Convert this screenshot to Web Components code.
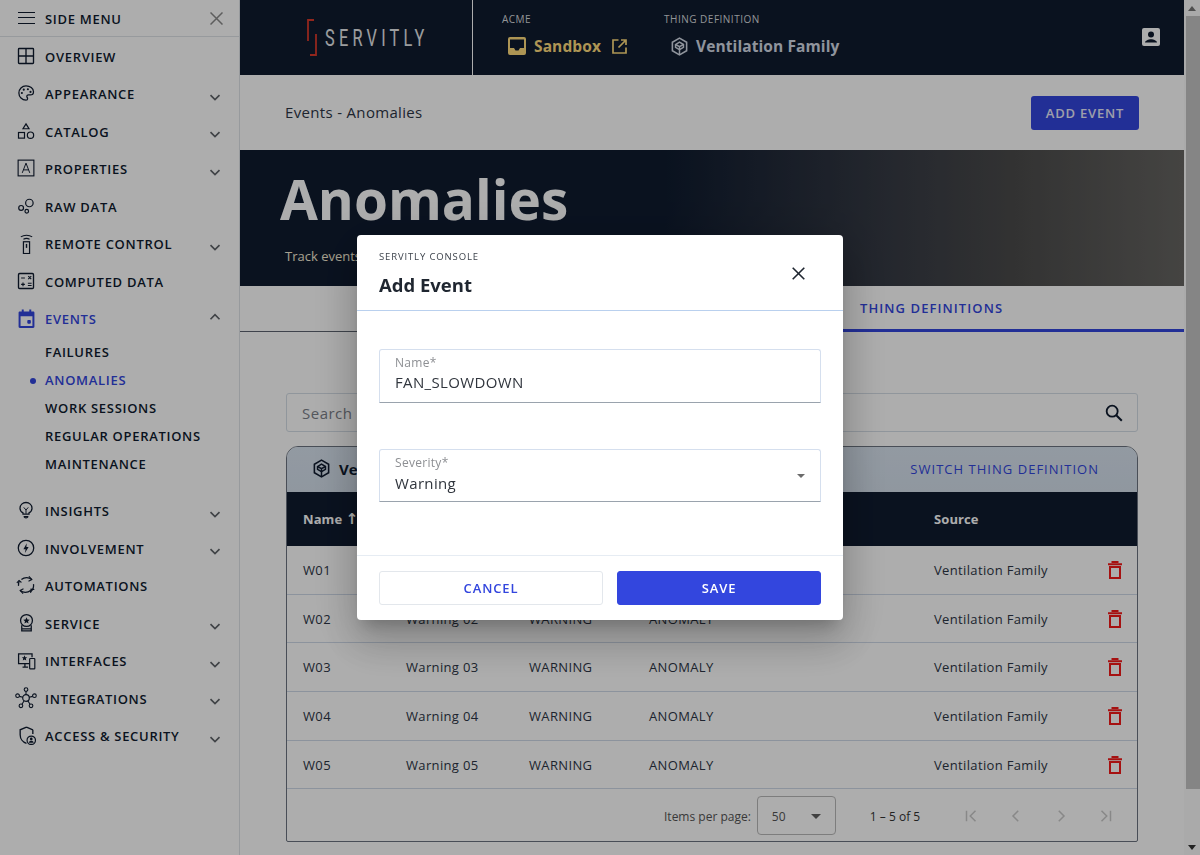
<!DOCTYPE html>
<html>
<head>
<meta charset="utf-8">
<title>Servitly</title>
<style>
  html, body { margin: 0; height: 100%; overflow: hidden; }
  body { font-family: "Open Sans", "Liberation Sans", sans-serif; color: #0f1b2f; background: #fff; }
  app-shell { height: 855px; }
</style>
</head>
<body>
<app-shell>
  <side-menu slot="side">
    <nav-item label="OVERVIEW" icon="overview"></nav-item>
    <nav-item label="APPEARANCE" icon="palette" chevron="down"></nav-item>
    <nav-item label="CATALOG" icon="shapes" chevron="down"></nav-item>
    <nav-item label="PROPERTIES" icon="props" chevron="down"></nav-item>
    <nav-item label="RAW DATA" icon="bubbles"></nav-item>
    <nav-item label="REMOTE CONTROL" icon="remote" chevron="down"></nav-item>
    <nav-item label="COMPUTED DATA" icon="calc"></nav-item>
    <nav-item label="EVENTS" icon="event" chevron="up" active>
      <sub-item>FAILURES</sub-item>
      <sub-item active>ANOMALIES</sub-item>
      <sub-item>WORK SESSIONS</sub-item>
      <sub-item>REGULAR OPERATIONS</sub-item>
      <sub-item>MAINTENANCE</sub-item>
    </nav-item>
    <nav-item label="INSIGHTS" icon="bulb" chevron="down"></nav-item>
    <nav-item label="INVOLVEMENT" icon="bolt" chevron="down"></nav-item>
    <nav-item label="AUTOMATIONS" icon="sync"></nav-item>
    <nav-item label="SERVICE" icon="badge" chevron="down"></nav-item>
    <nav-item label="INTERFACES" icon="devices" chevron="down"></nav-item>
    <nav-item label="INTEGRATIONS" icon="hub" chevron="down"></nav-item>
    <nav-item label="ACCESS &amp; SECURITY" icon="shield" chevron="down"></nav-item>
  </side-menu>
  <top-bar slot="top"></top-bar>
  <events-page slot="page"></events-page>
</app-shell>
<add-event-dialog></add-event-dialog>

<script>
  // shared icon paths, all on a 24x24 box
  const ICONS = {
    overview: '<rect x="2" y="2" width="20" height="20" rx="1" fill="none" stroke="currentColor" stroke-width="1.8"/><path d="M12 2v20M2 12h20" stroke="currentColor" stroke-width="1.8"/>',
    palette: '<path d="M12 2.5C6.7 2.5 2.5 6.7 2.5 12s4.2 9.5 9.5 9.5c1.3 0 2.1-.9 2.1-2 0-1.4-1-1.8-1-3 0-1.2 1-2 2.2-2h2.400c2.600 0 4.300-1.800 4.300-4.300C22 5.800 17.500 2.500 12 2.500z" fill="none" stroke="currentColor" stroke-width="1.700"/><circle cx="6.500" cy="12" r="1.400" fill="currentColor"/><circle cx="9" cy="7.500" r="1.400" fill="currentColor"/><circle cx="14.500" cy="7" r="1.400" fill="currentColor"/><circle cx="18" cy="10.500" r="1.400" fill="currentColor"/>',
    shapes: '<path d="M12 2.500l4 6.500H8z" fill="none" stroke="currentColor" stroke-width="1.600"/><rect x="2" y="14" width="8" height="7.500" fill="none" stroke="currentColor" stroke-width="1.600"/><circle cx="18" cy="17.500" r="4.200" fill="none" stroke="currentColor" stroke-width="1.600"/>',
    props: '<rect x="1.500" y="1.500" width="21" height="21" fill="none" stroke="currentColor" stroke-width="1.500"/><path d="M7 18.500L12 5.500l5 13M8.700 14.500h6.600" fill="none" stroke="currentColor" stroke-width="1.300"/>',
    bubbles: '<circle cx="5.500" cy="14.500" r="3.200" fill="none" stroke="currentColor" stroke-width="1.600"/><circle cx="16.500" cy="8" r="5" fill="none" stroke="currentColor" stroke-width="1.600"/><circle cx="13" cy="19" r="2.400" fill="none" stroke="currentColor" stroke-width="1.600"/>',
    remote: '<rect x="8.500" y="10" width="7" height="13.500" fill="none" stroke="currentColor" stroke-width="1.400"/><path d="M12 12.500v4.500" stroke="currentColor" stroke-width="1.600"/><path d="M5.500 4.500C9 2 15 2 18.500 4.500M8.500 7.200c2-1.200 5-1.200 7 0" fill="none" stroke="currentColor" stroke-width="1.200"/>',
    calc: '<rect x="2" y="2" width="20" height="20" rx="1.500" fill="none" stroke="currentColor" stroke-width="1.800"/><path d="M5.500 8h5M15 5.500l4 4M19 5.500l-4 4M5.500 16.500h5M8 14v5M14.500 15h5M14.500 18h5" stroke="currentColor" stroke-width="1.500"/>',
    event: '<path d="M2 22.500V4.500c0-.8.700-1.500 1.500-1.500H6V.5h2.500V3h7V.5H18V3h2.500c.8 0 1.500.7 1.500 1.500v18c0 .8-.7 1.500-1.500 1.500h-17C2.700 24 2 23.300 2 22.500zM4.500 9v12.500h15V9z" fill="currentColor" fill-rule="evenodd"/><rect x="13" y="14" width="4.500" height="4.500" rx="1" fill="currentColor"/>',
    bulb: '<path d="M8 17.500v-1.700c-2.500-1.400-4-3.500-4-6.300C4 5.300 7.500 2 12 2s8 3.300 8 7.500c0 2.800-1.500 4.900-4 6.300v1.700zM9 21h6" fill="none" stroke="currentColor" stroke-width="1.700"/><path d="M9 8.500l3 3.500 3-3.500M12 12v5M9.500 21l1 1.500h3l1-1.500" fill="none" stroke="currentColor" stroke-width="1.300"/>',
    bolt: '<circle cx="12" cy="12" r="10.300" fill="none" stroke="currentColor" stroke-width="1.700"/><path d="M13 5.500l-4.500 8H11.500L10.500 18.500 15.500 10.500H12.500z" fill="currentColor"/>',
    sync: '<path d="M6.500 5.500A9.500 9.500 0 0 1 19 5.500M21 11a9.500 9.500 0 0 1-3.500 9M17.500 18.500A9.500 9.500 0 0 1 5 18.500M3 13a9.500 9.500 0 0 1 1-6" fill="none" stroke="currentColor" stroke-width="1.500"/><path d="M15.500 1.500l3.500 4-4 2M8.500 22.500l-3.500-4 4-2M1 9.500L3.700 6.500 6.500 9M17.500 21.500L18 17l4 .5" fill="none" stroke="currentColor" stroke-width="1.300"/>',
    badge: '<circle cx="12" cy="9.500" r="7.500" fill="none" stroke="currentColor" stroke-width="1.600"/><path d="M12 5.500l1.200 2.700 2.900.3-2.200 1.900.7 2.900-2.600-1.500-2.600 1.500.7-2.900-2.200-1.900 2.900-.3z" fill="currentColor"/><path d="M6 15.500v7h12v-7M6 20h12" fill="none" stroke="currentColor" stroke-width="1.600"/>',
    devices: '<path d="M16 16H2V3.500h17V8" fill="none" stroke="currentColor" stroke-width="1.600"/><path d="M7 20.500h7M10 16v4.500" stroke="currentColor" stroke-width="1.600"/><path d="M9.500 5.500l1 2.300 2.400.2-1.800 1.600.6 2.400-2.200-1.300-2.200 1.300.6-2.400L6.100 8l2.400-.2z" fill="currentColor"/><rect x="16" y="9.500" width="6.500" height="13" rx=".8" fill="none" stroke="currentColor" stroke-width="1.500"/>',
    hub: '<circle cx="12" cy="12" r="3.600" fill="none" stroke="currentColor" stroke-width="1.300"/><circle cx="12" cy="2.800" r="2" fill="none" stroke="currentColor" stroke-width="1.200"/><circle cx="2.800" cy="9.500" r="2" fill="none" stroke="currentColor" stroke-width="1.200"/><circle cx="21.200" cy="9.500" r="2" fill="none" stroke="currentColor" stroke-width="1.200"/><circle cx="6.500" cy="20.500" r="2" fill="none" stroke="currentColor" stroke-width="1.200"/><circle cx="17.500" cy="20.500" r="2" fill="none" stroke="currentColor" stroke-width="1.200"/><path d="M12 4.800v3.600M4.700 10.200l3.900 1M19.300 10.200l-3.900 1M7.600 18.800l2.400-3.800M16.400 18.800L14 15" stroke="currentColor" stroke-width="1.200"/>',
    shield: '<path d="M12 1.500L4 4.800v6.200c0 5 3.400 9.500 8 11M20 4.800L12 1.500M20 4.800V10" fill="none" stroke="currentColor" stroke-width="1.700"/><circle cx="18" cy="18" r="5.300" fill="none" stroke="currentColor" stroke-width="1.500"/><circle cx="18" cy="16.300" r="1.700" fill="currentColor"/><path d="M14.800 21c.5-1.700 1.700-2.300 3.200-2.300s2.700.6 3.200 2.300z" fill="currentColor"/>',
    cube: '<path d="M12 1.500l9 5.200v10.600l-9 5.200-9-5.200V6.700z" fill="none" stroke="currentColor" stroke-width="2"/><path d="M7 9.500l5-3 5 3v3.500l-5 3-5-3z" fill="none" stroke="currentColor" stroke-width="1.900"/><path d="M7 9.500l5 2.800 5-2.800M12 12.300V22" fill="none" stroke="currentColor" stroke-width="1.900"/>'
  };
  const ICON_SIZE = { hub: 22, sync: 20, remote: 21, event: 19, shield: 19, badge: 19, devices: 19 };
  const svg = (name, size) => `<svg width="${size}" height="${size}" viewBox="0 0 24 24" aria-hidden="true">${ICONS[name]}</svg>`;
  const CHEVRON = { down: 'M6 9.500l6 6 6-6', up: 'M6 15l6-6 6 6' };
  const TRASH = '<svg width="14" height="18" viewBox="0 0 14 18" aria-hidden="true"><path d="M2 6h10v11H2z" fill="none" stroke="currentColor" stroke-width="2"/><path d="M0 3.200h14M3.500 1h7" stroke="currentColor" stroke-width="2"/></svg>';

  class AppShell extends HTMLElement {
    constructor() {
      super();
      this.attachShadow({ mode: "open" }).innerHTML = `
        <style>
          :host { display: grid; grid-template-columns: 240px 944px 16px; grid-template-rows: 75px 1fr; overflow: hidden; }
          .side { grid-row: 1 / 3; display: block; }
          .bar { grid-row: 1 / 3; grid-column: 3; display: grid; grid-template-rows: 16px 773px 1fr 16px; background: #fbfbfb; }
          .bar i { display: flex; align-items: center; justify-content: center; }
          .bar i::after { content: ""; border: 4px solid transparent; }
          .bar .u::after { border-bottom: 5px solid #777; border-top: 0; }
          .bar .d::after { border-top: 5px solid #333; border-bottom: 0; }
          .bar b { background: #c4c4c4; margin-left: 2px; }
          .page { grid-column: 2; overflow: hidden; display: block; }
        </style>
        <slot class="side" name="side"></slot>
        <slot name="top"></slot>
        <div class="bar"><i class="u"></i><b></b><span></span><i class="d"></i></div>
        <slot class="page" name="page"></slot>`;
    }
  }

  class SideMenu extends HTMLElement {
    constructor() {
      super();
      this.attachShadow({ mode: "open" }).innerHTML = `
        <style>
          :host { display: block; height: 855px; box-sizing: border-box; border-right: 1px solid #dfe3e8; font: 600 13px "Open Sans", sans-serif; letter-spacing: .7px; color: #0f1b2f; }
          header { height: 37px; box-sizing: border-box; border-bottom: 1px solid #dfe3e8; display: flex; align-items: center; padding: 1px 16px 0 18px; gap: 10px; margin-bottom: .8px; }
          header span { flex: 1; }
          .menu { width: 17px; height: 12px; margin-top: -1px; border-top: 1.5px solid #0f1b2f; border-bottom: 1.5px solid #0f1b2f; position: relative; box-sizing: border-box; }
          .menu::after { content: ""; position: absolute; left: 0; right: 0; top: 3.5px; height: 1.500px; background: #0f1b2f; }
          svg { display: block; }
        </style>
        <header>
          <div class="menu"></div><span>SIDE MENU</span>
          <svg width="13" height="13" viewBox="0 0 13 13"><path d="M.5.5l12 12M12.500.5l-12 12" stroke="#8a8a8a" stroke-width="1.500"/></svg>
        </header>
        <slot></slot>`;
    }
  }

  class NavItem extends HTMLElement {
    connectedCallback() {
      const chevron = this.getAttribute("chevron");
      const icon = this.getAttribute("icon");
      this.attachShadow({ mode: "open" }).innerHTML = `
        <style>
          :host { display: block; }
          .row { height: 37.5px; display: flex; align-items: center; padding: 0 15px 0 17px; gap: 10px; box-sizing: border-box; }
          :host([active]) .row { color: #3346de; }
          .label { flex: 1; white-space: nowrap; }
          .chev { color: #5f6368; margin-top: 5px; }
          :host([chevron="up"]) .chev { margin-top: -4px; }
          svg { display: block; flex: none; }
          .subs { display: block; padding: 0 0 14.800px; }
          slot:not(.has) { display: none; }
          .ic { width: 18px; height: 18px; display: flex; align-items: center; justify-content: center; margin-top: -2px; }
        </style>
        <div class="row">
          <span class="ic">${svg(icon, ICON_SIZE[icon] || 18)}</span>
          <span class="label">${this.getAttribute("label").replace("&", "&amp;")}</span>
          ${chevron ? `<svg class="chev" width="18" height="18" viewBox="0 0 24 24"><path d="${CHEVRON[chevron]}" fill="none" stroke="currentColor" stroke-width="2.200"/></svg>` : ""}
        </div>
        <slot class="subs ${this.children.length ? "has" : ""}"></slot>`;
    }
  }

  class SubItem extends HTMLElement {
    constructor() {
      super();
      this.attachShadow({ mode: "open" }).innerHTML = `
        <style>
          :host { display: flex; align-items: center; height: 28px; padding-left: 45px; position: relative; }
          :host([active]) { color: #3346de; }
          :host([active])::before { content: ""; position: absolute; left: 30px; top: 12px; width: 6px; height: 6px; border-radius: 50%; background: #3346de; }
        </style>
        <slot></slot>`;
    }
  }

  class TopBar extends HTMLElement {
    constructor() {
      super();
      this.attachShadow({ mode: "open" }).innerHTML = `
        <style>
          :host { display: flex; height: 75px; background: #0f1b2f; color: #fff; font-family: "Open Sans", sans-serif; }
          .brand { width: 233px; box-sizing: border-box; border-right: 1px solid #fff; display: flex; align-items: center; gap: 8px; padding-left: 67px; }
          .brand span { font: 400 24px "Roboto", sans-serif; letter-spacing: 6.2px; transform: scaleX(.68); transform-origin: left; width: 100px; color: #e6e8ea; white-space: nowrap; }
          .ctx { padding: 12px 0 0 29px; }
          .ctx + .ctx { padding-left: 0; }
          .title { font-size: 10px; letter-spacing: .5px; color: #d8dadd; line-height: 14px; }
          .val { display: flex; align-items: center; gap: 8px; margin: 9px 0 0 6px; font-weight: 700; font-size: 15.500px; height: 22px; white-space: nowrap; letter-spacing: .1px; }
          .gold { color: #ffdc7c; }
          .steel { color: #d4dbe6; gap: 7px; }
          .one { width: 162px; }
          .fill { flex: 1; }
          .user { margin: 28px 24px 0 0; }
          svg { display: block; }
        </style>
        <div class="brand">
          <svg width="10" height="37" viewBox="0 0 10 37"><path d="M7 1H1v21M9 15v21H3" fill="none" stroke="#d8392c" stroke-width="1.800"/></svg>
          <span>SERVITLY</span>
        </div>
        <div class="ctx one">
          <div class="title">ACME</div>
          <div class="val gold">
            <svg width="18" height="18" viewBox="0 0 18 18"><path d="M2 0h14a2 2 0 0 1 2 2v14a2 2 0 0 1-2 2H2a2 2 0 0 1-2-2V2a2 2 0 0 1 2-2zm0 2.500v8.500h4l1.500 2.500h3L12 11h4V2.500z" fill="#ffdc7c" fill-rule="evenodd"/></svg>
            <span>Sandbox</span>
            <svg style="margin-left:3px" width="15" height="15" viewBox="0 0 15 15"><path d="M6.500 1H1v13h13V8.500M9 1h5v5M14 1L6.500 8.500" fill="none" stroke="#ffdc7c" stroke-width="1.700"/></svg>
          </div>
        </div>
        <div class="ctx">
          <div class="title">THING DEFINITION</div>
          <div class="val steel">${svg("cube", 19)}<span>Ventilation Family</span></div>
        </div>
        <div class="fill"></div>
        <svg class="user" width="18" height="18" viewBox="0 0 18 18"><path d="M2 0h14a2 2 0 0 1 2 2v14a2 2 0 0 1-2 2H2a2 2 0 0 1-2-2V2a2 2 0 0 1 2-2z" fill="#fff"/><circle cx="9" cy="6.500" r="3" fill="#0f1b2f"/><path d="M3 14.500c0-2 3.500-3.300 6-3.300s6 1.300 6 3.300z" fill="#0f1b2f"/></svg>`;
    }
  }

  class EventsPage extends HTMLElement {
    constructor() {
      super();
      this.attachShadow({ mode: "open" }).innerHTML = `
        <style>
          :host { display: block; font-family: "Open Sans", sans-serif; color: #0f1b2f; }
          .crumbs { height: 75px; display: flex; align-items: center; justify-content: space-between; padding: 0 45px; font-size: 15px; box-sizing: border-box; color: #2d3646; letter-spacing: .33px; }
          .crumbs > span { margin-top: -2px; }
          .add { width: 108px; height: 34px; border-radius: 3px; background: #3346de; color: #e9ebfb; font-size: 13px; font-weight: 600; letter-spacing: .8px; display: flex; align-items: center; justify-content: center; }
          .hero { height: 136px; background: linear-gradient(90deg, #0f1b2f 0%, #0f1b2f 45%, #383c45 70%, #4b4b4b 82%, #666562 100%); padding: 14px 0 0 40px; box-sizing: border-box; color: #fff; }
          h1 { margin: 0; font-size: 54.900px; line-height: 70px; font-weight: 700; letter-spacing: 0; }
          .hero p { margin: 13px 0 0 5px; font-size: 13px; line-height: 18px; color: #f5ecd5; }
          .tabs { height: 46px; display: flex; justify-content: flex-end; box-sizing: border-box; border-bottom: 1px solid #5d6470; }
          .tab { width: 394px; box-sizing: border-box; height: 46px; border-bottom: 3px solid #3346de; color: #3346de; font-size: 13px; font-weight: 600; letter-spacing: 1.08px; padding: 13px 0 0 70px; }
          .body { padding: 61px 46px 0; }
          .search { height: 39px; box-sizing: border-box; border: 1px solid #d5dde6; border-radius: 3px; display: flex; align-items: center; justify-content: space-between; padding: 0 12px 0 15px; font-size: 15px; color: #7b8089; letter-spacing: .5px; }
          event-table { margin-top: 14px; }
          svg { display: block; }
        </style>
        <div class="crumbs"><span>Events - Anomalies</span><div class="add">ADD EVENT</div></div>
        <div class="hero"><h1>Anomalies</h1><p>Track events</p></div>
        <div class="tabs"><div class="tab">THING DEFINITIONS</div></div>
        <div class="body">
          <div class="search">
            <span>Search</span>
            <svg width="22" height="22" viewBox="0 0 24 24"><circle cx="10" cy="10" r="6" fill="none" stroke="#0f1b2f" stroke-width="2"/><path d="M14.500 14.500L20.500 20.500" stroke="#0f1b2f" stroke-width="2.200"/></svg>
          </div>
          <event-table></event-table>
        </div>`;
    }
  }

  class EventTable extends HTMLElement {
    constructor() {
      super();
      const rows = ["01", "02", "03", "04", "05"].map(n => `
        <div class="row">
          <span>W${n}</span><span>Warning ${n}</span><span>WARNING</span><span>ANOMALY</span><span></span>
          <span>Ventilation Family</span>
          <span class="del">${TRASH}</span>
        </div>`).join("");
      const chev = d => `<svg width="18" height="18" viewBox="0 0 24 24"><path d="${d}" fill="none" stroke="#c9c9c9" stroke-width="2"/></svg>`;
      this.attachShadow({ mode: "open" }).innerHTML = `
        <style>
          :host { display: block; height: 396px; box-sizing: border-box; border: 1px solid #6c7480; border-radius: 12px 12px 2px 2px; overflow: hidden; font-size: 13px; letter-spacing: .35px; color: #2d3646; }
          .head { height: 45px; display: flex; align-items: center; justify-content: space-between; padding: 0 38px 2px 25px; box-sizing: border-box; background: linear-gradient(#d8e3ef, #d4dfeb); }
          .head .thing { display: flex; align-items: center; gap: 8px; font-size: 15px; font-weight: 700; color: #0f1b2f; letter-spacing: .1px; }
          .head .sw { color: #3346de; font-weight: 400; letter-spacing: 1.02px; font-size: 13px; }
          .row, .cols { display: grid; grid-template-columns: 103px 123px 120px 141px 144px 1fr 38px; padding-left: 16px; align-items: center; }
          .cols { height: 54px; background: #0f1b2f; color: #fff; font-weight: 700; letter-spacing: .1px; }
          .cols i { font: 700 15px "DejaVu Sans", sans-serif; }
          .row { height: 48.700px; box-sizing: border-box; border-bottom: 1px solid #cfd9e8; }
          .del { color: #f51a1a; margin-left: 9px; }
          .pager { display: flex; align-items: center; height: 52px; padding-left: 377px; font-size: 12px; color: #555; letter-spacing: 0; }
          .pager > span, .nav { margin-top: 2px; }
          .size { width: 79px; height: 39px; margin-left: 6px; box-sizing: border-box; border: 1px solid #b9b9b9; border-radius: 4px; display: flex; align-items: center; justify-content: space-between; padding: 2px 14px 0; }
          .size i { border: 5px solid transparent; border-top-color: #5f5f5f; border-bottom: 0; }
          .range { margin-left: 34px; width: 92px; color: #333; }
          .nav { display: flex; gap: 27px; }
          svg { display: block; }
        </style>
        <div class="head">
          <div class="thing">${svg("cube", 19)}<span>Ventilation Family</span></div>
          <div class="sw">SWITCH THING DEFINITION</div>
        </div>
        <div class="cols"><span>Name <i>↑</i></span><span>Title</span><span>Severity</span><span>Type</span><span>Groups</span><span>Source</span><span></span></div>
        ${rows}
        <div class="pager">
          <span>Items per page:</span>
          <div class="size"><span>50</span><i></i></div>
          <span class="range">1 – 5 of 5</span>
          <div class="nav">
            ${chev("M6 5v14M18 5l-7 7 7 7")}${chev("M15 5l-7 7 7 7")}${chev("M9 5l7 7-7 7")}${chev("M6 5l7 7-7 7M18 5v14")}
          </div>
        </div>`;
    }
  }

  class FormField extends HTMLElement {
    constructor() {
      super();
      this.attachShadow({ mode: "open" }).innerHTML = `
        <style>
          :host { display: block; position: relative; box-sizing: border-box; height: 54px; border: 1px solid #d5dfee; border-bottom: 1px solid #9aa3ad; border-radius: 3px 3px 0 0; padding: 5px 15px 0; }
          :host([select]) { height: 53px; }
          .lab { font-size: 12px; line-height: 16px; color: #8d8f93; letter-spacing: .3px; }
          .val { font-size: 15px; line-height: 22px; color: #30353d; letter-spacing: .35px; }
          :host([select]) .val { margin-top: 1px; }
          :host([select])::after { content: ""; position: absolute; right: 15px; top: 24px; border: 4.500px solid transparent; border-top-color: #6b6b6b; border-bottom: 0; }
        </style>
        <div class="lab"><slot name="label"></slot></div>
        <div class="val"><slot></slot></div>`;
    }
  }

  class AddEventDialog extends HTMLElement {
    constructor() {
      super();
      this.attachShadow({ mode: "open" }).innerHTML = `
        <style>
          :host { position: fixed; inset: 0; display: flex; align-items: center; justify-content: center; background: rgba(0,0,0,.32); font-family: "Open Sans", sans-serif; }
          .box { width: 486px; height: 385px; background: #fff; border-radius: 4px; box-shadow: 0 11px 15px -7px rgba(0,0,0,.2), 0 24px 38px 3px rgba(0,0,0,.14), 0 9px 46px 8px rgba(0,0,0,.12); display: flex; flex-direction: column; }
          header { height: 76px; box-sizing: border-box; border-bottom: 1px solid #b9d0ee; padding: 15px 22px 0; position: relative; }
          .eyebrow { font-size: 9.500px; letter-spacing: .87px; line-height: 13px; color: #3d434c; }
          h2 { margin: 9px 0 0; font-size: 18.500px; line-height: 25px; font-weight: 700; color: #1f2630; }
          .close { position: absolute; top: 32px; right: 38px; }
          .fields { flex: 1; padding: 38px 22px 0; display: flex; flex-direction: column; gap: 46px; }
          footer { height: 65px; box-sizing: border-box; border-top: 1px solid #e6ecf3; padding: 15px 22px 0; display: flex; gap: 14px; }
          button { font: 600 13px "Open Sans", sans-serif; letter-spacing: .9px; height: 34px; border-radius: 3px; box-sizing: border-box; border: 1px solid #e3e7ec; background: #fff; color: #3346de; }
          button.cancel { width: 224px; }
          button.save { flex: 1; background: #3346de; border-color: #3346de; color: #fff; }
          svg { display: block; }
        </style>
        <div class="box">
          <header>
            <div class="eyebrow">SERVITLY CONSOLE</div>
            <h2>Add Event</h2>
            <svg class="close" width="13" height="13" viewBox="0 0 13 13"><path d="M.7.7l11.600 11.600M12.300.7L.7 12.300" stroke="#1f2630" stroke-width="1.600"/></svg>
          </header>
          <div class="fields">
            <form-field><span slot="label">Name*</span>FAN_SLOWDOWN</form-field>
            <form-field select><span slot="label">Severity*</span>Warning</form-field>
          </div>
          <footer>
            <button class="cancel">CANCEL</button>
            <button class="save">SAVE</button>
          </footer>
        </div>`;
    }
  }

  customElements.define("app-shell", AppShell);
  customElements.define("side-menu", SideMenu);
  customElements.define("nav-item", NavItem);
  customElements.define("sub-item", SubItem);
  customElements.define("top-bar", TopBar);
  customElements.define("events-page", EventsPage);
  customElements.define("event-table", EventTable);
  customElements.define("form-field", FormField);
  customElements.define("add-event-dialog", AddEventDialog);
</script>
</body>
</html>
